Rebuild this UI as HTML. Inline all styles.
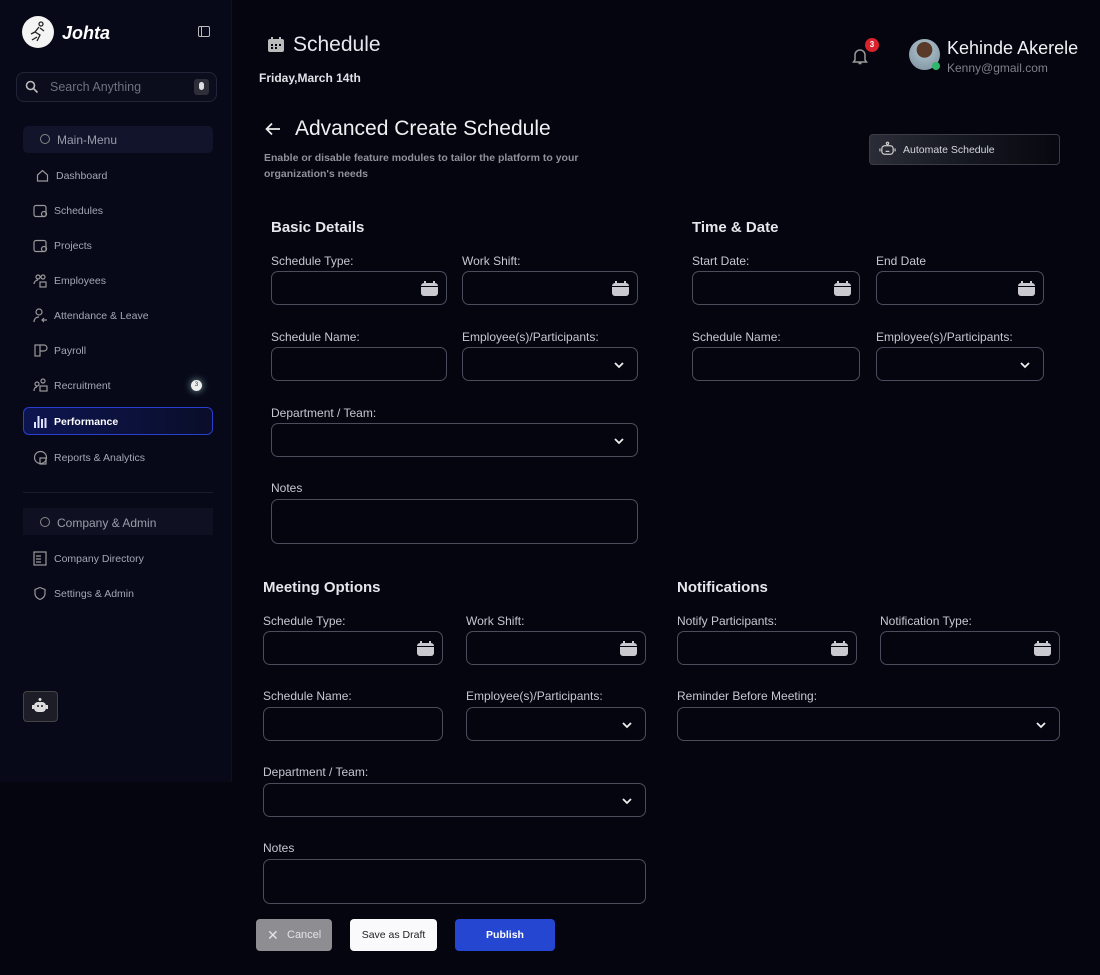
<!DOCTYPE html>
<html><head><meta charset="utf-8">
<style>
*{box-sizing:border-box;margin:0;padding:0}
body{width:1100px;height:975px;background:#04050f;font-family:"Liberation Sans",sans-serif;color:#d0d2da;position:relative;overflow:hidden}
.a{position:absolute}
.side{left:0;top:0;width:232px;height:782px;background:#070918;border-right:1px solid #0e1122}
.nav{position:absolute;left:33px;font-size:10.5px;color:#a4a7b3;display:flex;align-items:center;gap:6px}
.nav svg{width:15px;height:15px}
.l{position:absolute;font-size:12px;color:#c6c8d0}
.f{position:absolute;border:1.5px solid #4a4d5c;border-radius:7px;height:34px}
.h{position:absolute;font-size:15px;font-weight:bold;color:#e6e7ec}
.cal{position:absolute;right:8px;top:9px;width:17px;height:15px}
.chev{position:absolute;right:12px;top:11px;width:12px;height:12px}
</style></head><body>
<div class="a side"></div>
<div class="a" style="left:22px;top:16px;width:32px;height:32px;border-radius:50%;background:#f4f4f4"></div>
<svg class="a" style="left:27px;top:20px" width="22" height="24" viewBox="0 0 22 24" fill="none" stroke="#222" stroke-width="1.3"><circle cx="14" cy="4" r="2"/><path d="M12 7l-4 5 5 3-3 6M8 12l-4 2M13 8l4 3M10 17l-5 3"/></svg>
<div class="a" style="left:62px;top:23px;font-size:18px;font-weight:bold;font-style:italic;color:#fff">Johta</div>
<div class="a" style="left:198px;top:26px;width:12px;height:11px;border:1.5px solid #bbb;border-radius:2px"><div style="width:3px;height:100%;border-right:1.5px solid #bbb"></div></div>
<div class="a" style="left:16px;top:72px;width:201px;height:30px;border:1px solid #22253a;border-radius:8px;background:#0b0d1c"></div>
<svg class="a" style="left:25px;top:80px" width="14" height="14" viewBox="0 0 14 14" fill="none" stroke="#bbb" stroke-width="1.6"><circle cx="5.5" cy="5.5" r="4"/><path d="M8.5 8.5l4 4"/></svg>
<div class="a" style="left:50px;top:80px;font-size:12.5px;color:#6d7080">Search Anything</div>
<div class="a" style="left:194px;top:79px;width:15px;height:16px;border-radius:3px;background:#2c2e3a"></div>
<div class="a" style="left:199px;top:82px;width:5px;height:8px;border-radius:3px;background:#ddd"></div>
<div class="a" style="left:23px;top:126px;width:190px;height:27px;border-radius:5px;background:#11142a"></div>
<div class="a" style="left:40px;top:134px;width:10px;height:10px;border:1px solid #888;border-radius:50%"></div>
<div class="a" style="left:57px;top:133px;font-size:12px;color:#9a9dab">Main-Menu</div>
<div class="nav" style="top:168px;left:35px"><svg viewBox="0 0 15 15" fill="none" stroke="#999" stroke-width="1.2"><path d="M2.5 7l5-4.5 5 4.5v6h-10z"/></svg>Dashboard</div>
<div class="nav" style="top:203px"><svg viewBox="0 0 15 15" fill="none" stroke="#999" stroke-width="1.2"><rect x="1" y="2.5" width="12" height="11" rx="2"/><circle cx="11" cy="11" r="2.5"/></svg>Schedules</div>
<div class="nav" style="top:238px"><svg viewBox="0 0 15 15" fill="none" stroke="#999" stroke-width="1.2"><rect x="1" y="2.5" width="12" height="11" rx="2"/><circle cx="11" cy="11" r="2.5"/></svg>Projects</div>
<div class="nav" style="top:273px"><svg viewBox="0 0 15 15" fill="none" stroke="#999" stroke-width="1.2"><circle cx="5" cy="4" r="2"/><circle cx="10" cy="4" r="2"/><rect x="7" y="9" width="6" height="5"/><path d="M1 11c0-2 2-4 4-4"/></svg>Employees</div>
<div class="nav" style="top:308px"><svg viewBox="0 0 15 15" fill="none" stroke="#999" stroke-width="1.2"><circle cx="6" cy="4" r="3"/><path d="M1 14c0-3 2-5 5-5M9 12h5M11 10l-2 2 2 2"/></svg>Attendance &amp; Leave</div>
<div class="nav" style="top:343px"><svg viewBox="0 0 15 15" fill="none" stroke="#999" stroke-width="1.2"><rect x="2" y="2" width="5" height="11"/><path d="M7 2h4a3 3 0 010 6H7"/></svg>Payroll</div>
<div class="nav" style="top:378px"><svg viewBox="0 0 15 15" fill="none" stroke="#999" stroke-width="1.2"><circle cx="4" cy="6" r="2"/><circle cx="10" cy="3" r="2"/><rect x="7" y="8" width="7" height="5"/><path d="M1 13c0-2 1-4 3-4"/></svg>Recruitment</div>
<div class="a" style="left:191px;top:380px;width:11px;height:11px;border-radius:50%;background:#eee;box-shadow:0 0 8px #8aa;font-size:6px;color:#333;text-align:center;line-height:11px">3</div>
<div class="a" style="left:23px;top:407px;width:190px;height:28px;border-radius:6px;border:1.5px solid #2a3ed0;background:linear-gradient(90deg,#0d1550,#0a0e2a)"></div>
<div class="nav" style="top:414px;color:#fff;font-weight:bold"><svg viewBox="0 0 15 15" fill="#dfe3ff"><rect x="1" y="8" width="2" height="6"/><rect x="4.5" y="2" width="2" height="12"/><rect x="8" y="5" width="2" height="9"/><rect x="11.5" y="4" width="2" height="10"/></svg>Performance</div>
<div class="nav" style="top:450px"><svg viewBox="0 0 15 15" fill="none" stroke="#999" stroke-width="1.2"><circle cx="7.5" cy="7.5" r="6"/><rect x="7" y="8" width="6" height="6"/></svg>Reports &amp; Analytics</div>
<div class="a" style="left:23px;top:492px;width:190px;height:1px;background:#1a1d2e"></div>
<div class="a" style="left:23px;top:508px;width:190px;height:27px;background:#0f1122"></div>
<div class="a" style="left:40px;top:517px;width:10px;height:10px;border:1px solid #888;border-radius:50%"></div>
<div class="a" style="left:57px;top:516px;font-size:12px;color:#9a9dab">Company &amp; Admin</div>
<div class="nav" style="top:551px"><svg viewBox="0 0 15 15" fill="none" stroke="#999" stroke-width="1.2"><rect x="1" y="1" width="12" height="13"/><path d="M3 5h5M3 8h5M3 11h5"/></svg>Company Directory</div>
<div class="nav" style="top:586px"><svg viewBox="0 0 15 15" fill="none" stroke="#999" stroke-width="1.2"><path d="M7 1.5l5 2v4c0 3-2.5 5-5 6-2.5-1-5-3-5-6v-4z"/></svg>Settings &amp; Admin</div>
<div class="a" style="left:23px;top:691px;width:35px;height:31px;border:1px solid #444;border-radius:4px;background:#1c1d27"></div>
<svg class="a" style="left:31px;top:697px" width="18" height="18" viewBox="0 0 18 18" fill="#ddd"><circle cx="9" cy="2.5" r="1.5"/><rect x="3" y="5" width="12" height="10" rx="4"/><rect x="1" y="8" width="2" height="4"/><rect x="15" y="8" width="2" height="4"/><circle cx="7" cy="9" r="1" fill="#1c1d27"/><circle cx="11" cy="9" r="1" fill="#1c1d27"/></svg>

<svg class="a" style="left:268px;top:37px" width="16" height="15" viewBox="0 0 16 15" fill="#bbb"><rect x="0" y="2" width="16" height="13" rx="2"/><rect x="3" y="0" width="2" height="4"/><rect x="11" y="0" width="2" height="4"/><g fill="#04050f"><rect x="3" y="7" width="2" height="2"/><rect x="7" y="7" width="2" height="2"/><rect x="11" y="7" width="2" height="2"/><rect x="3" y="10" width="2" height="2"/><rect x="7" y="10" width="2" height="2"/></g></svg>
<div class="a" style="left:293px;top:33px;font-size:21px;color:#e6e7ec">Schedule</div>
<div class="a" style="left:259px;top:71px;font-size:12px;font-weight:bold;color:#e0e1e6">Friday,March 14th</div>
<svg class="a" style="left:852px;top:47px" width="16" height="18" viewBox="0 0 16 18" fill="none" stroke="#999" stroke-width="1.5"><path d="M3 13V8a5 5 0 0110 0v5l1.5 2h-13zM6.5 16.5h3"/></svg>
<div class="a" style="left:865px;top:38px;width:14px;height:14px;border-radius:50%;background:#d8222d;font-size:8px;color:#fff;text-align:center;line-height:14px;font-weight:bold">3</div>
<div class="a" style="left:909px;top:39px;width:31px;height:31px;border-radius:50%;background:radial-gradient(circle at 50% 35%,#5a3b2a 30%,#9fb5c0 32%,#7b8c99)"></div>
<div class="a" style="left:932px;top:62px;width:8px;height:8px;border-radius:50%;background:#2fb86a"></div>
<div class="a" style="left:947px;top:38px;font-size:18px;color:#f0f0f3">Kehinde Akerele</div>
<div class="a" style="left:947px;top:61px;font-size:12px;color:#7d808c">Kenny@gmail.com</div>

<svg class="a" style="left:265px;top:122px" width="16" height="14" viewBox="0 0 16 14" fill="none" stroke="#eee" stroke-width="1.7"><path d="M15 7H2M7 1.5L1.5 7 7 12.5"/></svg>
<div class="a" style="left:295px;top:117px;font-size:21px;color:#f0f0f3">Advanced Create Schedule</div>
<div class="a" style="left:264px;top:151px;font-size:10.5px;font-weight:bold;line-height:15.5px;color:#8f919c;width:335px">Enable or disable feature modules to tailor the platform to your organization's needs</div>
<div class="a" style="left:869px;top:134px;width:191px;height:31px;border:1px solid #3a3c48;border-radius:4px;background:linear-gradient(90deg,#2a2c37,#14161f 55%,#07080f)"></div>
<svg class="a" style="left:879px;top:141px" width="17" height="17" viewBox="0 0 18 18" fill="none" stroke="#ccc" stroke-width="1.3"><circle cx="9" cy="2.5" r="1.2"/><rect x="3" y="5" width="12" height="9" rx="3"/><path d="M1 8v3M17 8v3M7 11h4"/></svg>
<div class="a" style="left:903px;top:144px;font-size:10.5px;color:#d5d6dc">Automate Schedule</div>

<div class="h" style="left:271px;top:219px">Basic Details</div>
<div class="l" style="left:271px;top:254px">Schedule Type:</div>
<div class="f" style="left:271px;top:271px;width:176px"><svg class="cal" viewBox="0 0 17 15"><rect x="0" y="2" width="17" height="13" rx="3" fill="#c9c9cf"/><rect x="3" y="0" width="2" height="4" fill="#c9c9cf"/><rect x="12" y="0" width="2" height="4" fill="#c9c9cf"/><rect x="0" y="5" width="17" height="1" fill="#04050f"/></svg></div>
<div class="l" style="left:462px;top:254px">Work Shift:</div>
<div class="f" style="left:462px;top:271px;width:176px"><svg class="cal" viewBox="0 0 17 15"><rect x="0" y="2" width="17" height="13" rx="3" fill="#c9c9cf"/><rect x="3" y="0" width="2" height="4" fill="#c9c9cf"/><rect x="12" y="0" width="2" height="4" fill="#c9c9cf"/><rect x="0" y="5" width="17" height="1" fill="#04050f"/></svg></div>
<div class="l" style="left:271px;top:330px">Schedule Name:</div>
<div class="f" style="left:271px;top:347px;width:176px"></div>
<div class="l" style="left:462px;top:330px">Employee(s)/Participants:</div>
<div class="f" style="left:462px;top:347px;width:176px"><svg class="chev" viewBox="0 0 12 12" fill="none" stroke="#eee" stroke-width="1.8"><path d="M2 4l4 4 4-4"/></svg></div>
<div class="l" style="left:271px;top:406px">Department / Team:</div>
<div class="f" style="left:271px;top:423px;width:367px"><svg class="chev" viewBox="0 0 12 12" fill="none" stroke="#eee" stroke-width="1.8"><path d="M2 4l4 4 4-4"/></svg></div>
<div class="l" style="left:271px;top:481px">Notes</div>
<div class="f" style="left:271px;top:499px;width:367px;height:45px"></div>

<div class="h" style="left:692px;top:219px">Time &amp; Date</div>
<div class="l" style="left:692px;top:254px">Start Date:</div>
<div class="f" style="left:692px;top:271px;width:168px"><svg class="cal" viewBox="0 0 17 15"><rect x="0" y="2" width="17" height="13" rx="3" fill="#c9c9cf"/><rect x="3" y="0" width="2" height="4" fill="#c9c9cf"/><rect x="12" y="0" width="2" height="4" fill="#c9c9cf"/><rect x="0" y="5" width="17" height="1" fill="#04050f"/></svg></div>
<div class="l" style="left:876px;top:254px">End Date</div>
<div class="f" style="left:876px;top:271px;width:168px"><svg class="cal" viewBox="0 0 17 15"><rect x="0" y="2" width="17" height="13" rx="3" fill="#c9c9cf"/><rect x="3" y="0" width="2" height="4" fill="#c9c9cf"/><rect x="12" y="0" width="2" height="4" fill="#c9c9cf"/><rect x="0" y="5" width="17" height="1" fill="#04050f"/></svg></div>
<div class="l" style="left:692px;top:330px">Schedule Name:</div>
<div class="f" style="left:692px;top:347px;width:168px"></div>
<div class="l" style="left:876px;top:330px">Employee(s)/Participants:</div>
<div class="f" style="left:876px;top:347px;width:168px"><svg class="chev" viewBox="0 0 12 12" fill="none" stroke="#eee" stroke-width="1.8"><path d="M2 4l4 4 4-4"/></svg></div>

<div class="h" style="left:263px;top:579px">Meeting Options</div>
<div class="l" style="left:263px;top:614px">Schedule Type:</div>
<div class="f" style="left:263px;top:631px;width:180px"><svg class="cal" viewBox="0 0 17 15"><rect x="0" y="2" width="17" height="13" rx="3" fill="#c9c9cf"/><rect x="3" y="0" width="2" height="4" fill="#c9c9cf"/><rect x="12" y="0" width="2" height="4" fill="#c9c9cf"/><rect x="0" y="5" width="17" height="1" fill="#04050f"/></svg></div>
<div class="l" style="left:466px;top:614px">Work Shift:</div>
<div class="f" style="left:466px;top:631px;width:180px"><svg class="cal" viewBox="0 0 17 15"><rect x="0" y="2" width="17" height="13" rx="3" fill="#c9c9cf"/><rect x="3" y="0" width="2" height="4" fill="#c9c9cf"/><rect x="12" y="0" width="2" height="4" fill="#c9c9cf"/><rect x="0" y="5" width="17" height="1" fill="#04050f"/></svg></div>
<div class="l" style="left:263px;top:689px">Schedule Name:</div>
<div class="f" style="left:263px;top:707px;width:180px"></div>
<div class="l" style="left:466px;top:689px">Employee(s)/Participants:</div>
<div class="f" style="left:466px;top:707px;width:180px"><svg class="chev" viewBox="0 0 12 12" fill="none" stroke="#eee" stroke-width="1.8"><path d="M2 4l4 4 4-4"/></svg></div>
<div class="l" style="left:263px;top:765px">Department / Team:</div>
<div class="f" style="left:263px;top:783px;width:383px"><svg class="chev" viewBox="0 0 12 12" fill="none" stroke="#eee" stroke-width="1.8"><path d="M2 4l4 4 4-4"/></svg></div>
<div class="l" style="left:263px;top:841px">Notes</div>
<div class="f" style="left:263px;top:859px;width:383px;height:45px"></div>

<div class="h" style="left:677px;top:579px">Notifications</div>
<div class="l" style="left:677px;top:614px">Notify Participants:</div>
<div class="f" style="left:677px;top:631px;width:180px"><svg class="cal" viewBox="0 0 17 15"><rect x="0" y="2" width="17" height="13" rx="3" fill="#c9c9cf"/><rect x="3" y="0" width="2" height="4" fill="#c9c9cf"/><rect x="12" y="0" width="2" height="4" fill="#c9c9cf"/><rect x="0" y="5" width="17" height="1" fill="#04050f"/></svg></div>
<div class="l" style="left:880px;top:614px">Notification Type:</div>
<div class="f" style="left:880px;top:631px;width:180px"><svg class="cal" viewBox="0 0 17 15"><rect x="0" y="2" width="17" height="13" rx="3" fill="#c9c9cf"/><rect x="3" y="0" width="2" height="4" fill="#c9c9cf"/><rect x="12" y="0" width="2" height="4" fill="#c9c9cf"/><rect x="0" y="5" width="17" height="1" fill="#04050f"/></svg></div>
<div class="l" style="left:677px;top:689px">Reminder Before Meeting:</div>
<div class="f" style="left:677px;top:707px;width:383px"><svg class="chev" viewBox="0 0 12 12" fill="none" stroke="#eee" stroke-width="1.8"><path d="M2 4l4 4 4-4"/></svg></div>

<div class="a" style="left:256px;top:919px;width:76px;height:32px;border-radius:4px;background:#8e8e92;color:#e4e4e6;font-size:11px;line-height:32px"><span style="position:absolute;left:11px;font-size:14px">✕</span><span style="position:absolute;left:31px">Cancel</span></div>
<div class="a" style="left:350px;top:919px;width:87px;height:32px;border-radius:4px;background:#fafafc;color:#222;font-size:10.5px;line-height:32px;text-align:center">Save as Draft</div>
<div class="a" style="left:455px;top:919px;width:100px;height:32px;border-radius:4px;background:#2446d0;color:#fff;font-size:10.5px;font-weight:bold;line-height:32px;text-align:center">Publish</div>
</body></html>
